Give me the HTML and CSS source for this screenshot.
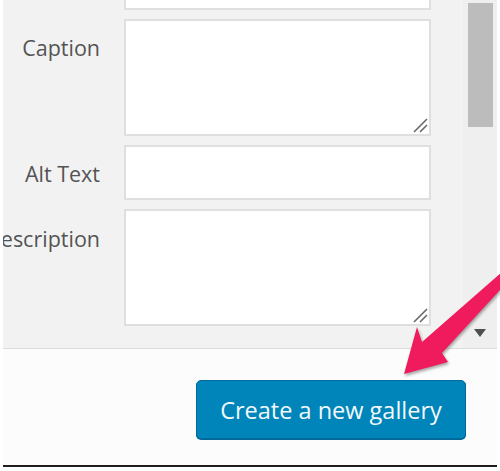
FILE: index.html
```html
<!DOCTYPE html>
<html>
<head>
<meta charset="utf-8">
<link rel="stylesheet" href="styles.css">
</head>
<body>
<div class="frame">
  <div class="panel">
    <div class="fields">
      <div class="row row-top">
        <span class="label"></span>
        <div class="box box-top"></div>
      </div>
      <div class="row">
        <span class="label">Caption</span>
        <div class="box box-area">
          <svg class="grip" width="16" height="16" viewBox="0 0 16 16"><path d="M2 15 L15 2 M8 15 L15 8" stroke="#6a6a6a" stroke-width="1.6" fill="none"/></svg>
        </div>
      </div>
      <div class="row row-alt">
        <span class="label">Alt Text</span>
        <div class="box box-input"></div>
      </div>
      <div class="row row-desc">
        <span class="label">Description</span>
        <div class="box box-area">
          <svg class="grip" width="16" height="16" viewBox="0 0 16 16"><path d="M2 15 L15 2 M8 15 L15 8" stroke="#6a6a6a" stroke-width="1.6" fill="none"/></svg>
        </div>
      </div>
    </div>
    <div class="scrollbar">
      <div class="thumb"></div>
      <div class="down"></div>
    </div>
  </div>
  <div class="footer">
    <button class="primary">Create a new gallery</button>
  </div>
  <div class="rule"></div>
</div>
<svg class="arrow" width="500" height="471" viewBox="0 0 500 471">
  <polygon points="501,273 422,342 417,327 404,374 448,362 442,353 501,289" fill="#ef1b5c"/>
</svg>
</body>
</html>
```
FILE: styles.css
```css
html, body {
  margin: 0;
  padding: 0;
  background: #ffffff;
}
body {
  width: 500px;
  height: 471px;
  overflow: hidden;
  position: relative;
  font-family: "Open Sans", "Noto Sans", sans-serif;
}
.frame {
  margin-left: 3px;
  width: 494px;
}
.panel {
  height: 348px;
  background: #f2f2f2;
  border-bottom: 1px solid #dcdcdc;
  display: flex;
  overflow: hidden;
}
.fields {
  flex: 1;
  display: flex;
  flex-direction: column;
  gap: 9px;
}
.row {
  display: grid;
  grid-template-columns: 97px 307px;
  column-gap: 24px;
  align-items: start;
}
.label {
  font-size: 21.5px;
  color: #545454;
  text-align: right;
  white-space: nowrap;
  direction: rtl;
  padding-top: 15px;
  line-height: 28px;
}
.row-top .label {
  padding-top: 0;
  line-height: 0;
}
.row-alt .label {
  padding-top: 15px;
}
.row-desc .label {
  padding-top: 16px;
}
.box {
  box-sizing: border-box;
  background: #ffffff;
  border: 2px solid #dfdfdf;
  position: relative;
}
.box-top {
  height: 10px;
  border-top: none;
}
.box-area {
  height: 117px;
}
.box-input {
  height: 55px;
}
.grip {
  position: absolute;
  right: 1px;
  bottom: 1px;
}
.scrollbar {
  width: 34px;
  background: #efefef;
  position: relative;
  display: flex;
  flex-direction: column;
  align-items: center;
}
.thumb {
  margin-top: 3px;
  width: 25px;
  height: 124px;
  background: #bcbcbc;
}
.down {
  margin-top: auto;
  margin-bottom: 11px;
  width: 0;
  height: 0;
  border-left: 6.5px solid transparent;
  border-right: 6.5px solid transparent;
  border-top: 8px solid #4e4e4e;
}
.footer {
  height: 116px;
  background: #fcfcfc;
  display: flex;
  justify-content: flex-end;
  align-items: flex-start;
  padding-right: 31px;
  box-sizing: border-box;
  padding-top: 31px;
}
.primary {
  width: 270px;
  height: 59px;
  box-sizing: border-box;
  background: #0085ba;
  border: 1px solid #006b9c;
  border-radius: 5px;
  color: #f2f8fb;
  font-family: "Open Sans", "Noto Sans", sans-serif;
  font-size: 23.5px;
  padding: 0;
  box-shadow: 0 1px 0 #006799;
}
.rule {
  height: 2px;
  background: #1e1e1e;
}
.arrow {
  position: absolute;
  left: 0;
  top: 0;
  filter: drop-shadow(1px 2px 1.5px rgba(0,0,0,0.35));
  pointer-events: none;
}
```
